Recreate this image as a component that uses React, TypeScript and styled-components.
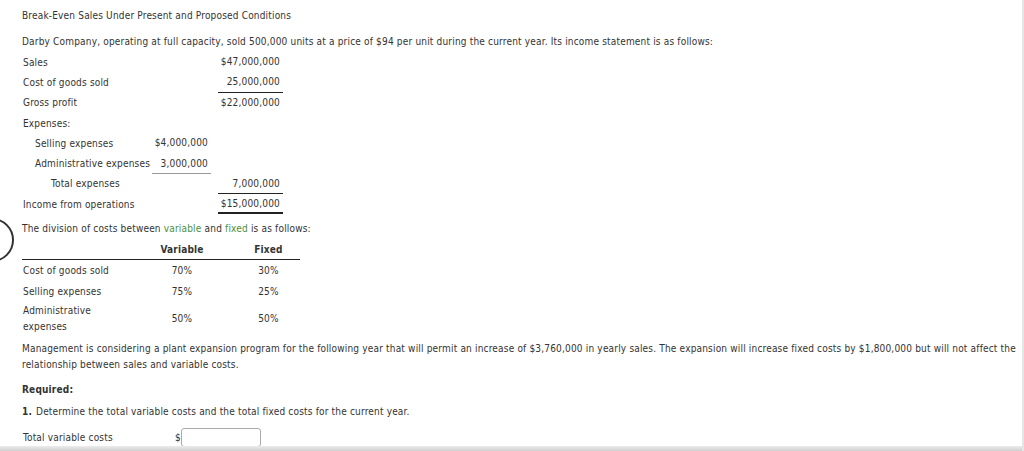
import styled, { createGlobalStyle } from "styled-components";

const GlobalStyle = createGlobalStyle`
  html, body {
    margin: 0;
    padding: 0;
    background: #fff;
  }
  body {
    font-family: "DejaVu Sans Condensed", "DejaVu Sans", sans-serif;
    font-size: 10px;
    letter-spacing: 0.18px;
    color: #333;
  }
`;

const Page = styled.div`
  position: relative;
  width: 1024px;
  height: 451px;
  overflow: hidden;
  box-sizing: border-box;
  padding: 10px 2px 0 22px;
  border-right: 2px solid #e6e6e6;
`;

const Title = styled.div`
  line-height: 12px;
  margin: 0 0 12px;
`;

const Para = styled.p<{ $gap?: number }>`
  margin: 0 0 ${(p) => p.$gap ?? 0}px;
  line-height: 16px;
`;

const Statement = styled.div`
  display: grid;
  grid-template-columns: 130px 59px 7px 65px;
  grid-auto-rows: 20.3px;
  align-items: stretch;
  margin-top: 2px;
  margin-bottom: 7px;
`;

const Label = styled.div<{ $indent?: number }>`
  display: flex;
  align-items: center;
  padding-left: ${(p) => 1 + (p.$indent ?? 0)}px;
  grid-column: 1;
  white-space: nowrap;
`;

const Amount = styled.div<{ $col: number; $rule?: "single" | "light" | "double" }>`
  grid-column: ${(p) => (p.$col === 1 ? 2 : 4)};
  display: flex;
  align-items: center;
  justify-content: flex-end;
  padding-right: 3px;
  box-sizing: border-box;
  border-bottom: ${(p) =>
    p.$rule === "single"
      ? "1px solid #222"
      : p.$rule === "light"
      ? "1px solid #999"
      : p.$rule === "double"
      ? "2px solid #222"
      : "1px solid transparent"};
`;

const Green = styled.span`
  color: #4d8f3c;
`;

const Split = styled.div`
  display: grid;
  grid-template-columns: 105px 110px 63px;
  width: 278px;
  margin-top: 4px;
`;

const HeadCell = styled.div`
  font-weight: bold;
  text-align: center;
  padding: 3px 0 4px;
  border-bottom: 1px solid #222;
`;

const Cell = styled.div<{ $center?: boolean }>`
  display: flex;
  align-items: center;
  justify-content: ${(p) => (p.$center ? "center" : "flex-start")};
  min-height: 20px;
  line-height: 16px;
  padding-left: ${(p) => (p.$center ? 0 : 1)}px;
  padding-top: 1px;
`;

const Bold = styled.div`
  font-weight: bold;
  line-height: 16px;
  margin: 0 0 6px;
`;

const Step = styled.div`
  line-height: 16px;
  margin: 0 0 7px;
  b {
    margin-right: 4px;
  }
`;

const AnswerRow = styled.div`
  display: flex;
  align-items: center;
  height: 20px;
`;

const AnswerLabel = styled.div`
  width: 152px;
  padding-left: 1px;
`;

const Input = styled.input`
  width: 80px;
  height: 19px;
  box-sizing: border-box;
  border: 1px solid #aaa;
  border-radius: 3px;
  background: #fff;
  padding: 0 3px;
  font: inherit;
`;

const NavCircle = styled.div`
  position: absolute;
  left: -30px;
  top: 218px;
  width: 40px;
  height: 40px;
  border: 2px solid #333;
  border-radius: 50%;
`;

const BottomShade = styled.div`
  position: absolute;
  left: 0;
  right: 0;
  bottom: 0;
  height: 5px;
  background: linear-gradient(#ececec, #cfcfcf);
`;

export default function App() {
  return (
    <>
      <GlobalStyle />
      <Page>
        <NavCircle />
        <Title>Break-Even Sales Under Present and Proposed Conditions</Title>
        <Para>
          Darby Company, operating at full capacity, sold 500,000 units at a price of $94 per unit
          during the current year. Its income statement is as follows:
        </Para>

        <Statement>
          <Label>Sales</Label>
          <Amount $col={2}>$47,000,000</Amount>

          <Label>Cost of goods sold</Label>
          <Amount $col={2} $rule="single">25,000,000</Amount>

          <Label>Gross profit</Label>
          <Amount $col={2}>$22,000,000</Amount>

          <Label>Expenses:</Label>

          <Label $indent={12}>Selling expenses</Label>
          <Amount $col={1}>$4,000,000</Amount>

          <Label $indent={12}>Administrative expenses</Label>
          <Amount $col={1} $rule="light">3,000,000</Amount>

          <Label $indent={28}>Total expenses</Label>
          <Amount $col={2} $rule="single">7,000,000</Amount>

          <Label>Income from operations</Label>
          <Amount $col={2} $rule="double">$15,000,000</Amount>
        </Statement>

        <Para>
          The division of costs between <Green>variable</Green> and <Green>fixed</Green> is as
          follows:
        </Para>

        <Split>
          <HeadCell />
          <HeadCell>Variable</HeadCell>
          <HeadCell>Fixed</HeadCell>

          <Cell>Cost of goods sold</Cell>
          <Cell $center>70%</Cell>
          <Cell $center>30%</Cell>

          <Cell>Selling expenses</Cell>
          <Cell $center>75%</Cell>
          <Cell $center>25%</Cell>

          <Cell>Administrative expenses</Cell>
          <Cell $center>50%</Cell>
          <Cell $center>50%</Cell>
        </Split>

        <Para $gap={9} style={{ marginTop: 6 }}>
          Management is considering a plant expansion program for the following year that will
          permit an increase of $3,760,000 in yearly sales. The expansion will increase fixed
          costs by $1,800,000 but will not affect the relationship between sales and variable
          costs.
        </Para>

        <Bold>Required:</Bold>

        <Step>
          <b>1.</b>Determine the total variable costs and the total fixed costs for the current
          year.
        </Step>

        <AnswerRow>
          <AnswerLabel>Total variable costs</AnswerLabel>
          <span>$</span>
          <Input type="text" />
        </AnswerRow>

        <BottomShade />
      </Page>
    </>
  );
}
